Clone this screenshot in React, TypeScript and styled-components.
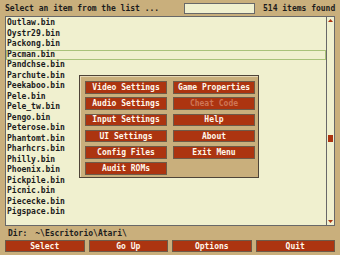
import React, { FC } from "react";
import styled, { createGlobalStyle } from "styled-components";

const GlobalStyle = createGlobalStyle`
  html, body {
    margin: 0;
    padding: 0;
    background: #c9af7c;
  }
  body {
    font-family: "DejaVu Sans Mono", "Liberation Mono", monospace;
  }
`;

const romList = [
  "Outlaw.bin",
  "Oystr29.bin",
  "Packong.bin",
  "Pacman.bin",
  "Pandchse.bin",
  "Parchute.bin",
  "Peekaboo.bin",
  "Pele.bin",
  "Pele_tw.bin",
  "Pengo.bin",
  "Peterose.bin",
  "Phantomt.bin",
  "Pharhcrs.bin",
  "Philly.bin",
  "Phoenix.bin",
  "Pickpile.bin",
  "Picnic.bin",
  "Piececke.bin",
  "Pigspace.bin",
];

const menuItems = [
  { label: "Video Settings" },
  { label: "Audio Settings" },
  { label: "Input Settings" },
  { label: "UI Settings" },
  { label: "Config Files" },
  { label: "Audit ROMs" },
  { label: "Game Properties" },
  { label: "Cheat Code", disabled: true },
  { label: "Help" },
  { label: "About" },
  { label: "Exit Menu" },
];

const Screen = styled.div`
  position: relative;
  width: 340px;
  height: 255px;
  box-sizing: border-box;
  padding: 0 5px;
  display: flex;
  flex-direction: column;
  background: #c9af7c;
  color: #1c1c1c;
  font-size: 8px;
  font-weight: bold;
  overflow: hidden;
`;

const Header = styled.div`
  height: 16px;
  display: flex;
  align-items: center;
`;

const Title = styled.div`
  flex: 1;
  white-space: pre;
`;

const SearchBox = styled.div`
  width: 71px;
  height: 11px;
  box-sizing: border-box;
  margin-right: 8px;
  background: #f0f0cf;
  border: 1px solid #686868;
`;

const Count = styled.div`
  width: 72px;
  white-space: pre;
`;

const ListBox = styled.div`
  height: 210px;
  box-sizing: border-box;
  display: flex;
  background: #f0f0cf;
  border: 1px solid #686868;
`;

const Rows = styled.div`
  flex: 1;
  padding-top: 1px;
  overflow: hidden;
`;

const Row = styled.div<{ $selected?: boolean }>`
  height: 10.5px;
  line-height: 10.5px;
  padding-left: 1px;
  white-space: pre;
  box-shadow: ${(p) => (p.$selected ? "inset 0 0 0 1px #a9c27a" : "none")};
`;

const ScrollBar = styled.div`
  position: relative;
  width: 7px;
  border-left: 1px solid #686868;
  display: flex;
  flex-direction: column;
  justify-content: space-between;
`;

const Arrow = styled.div`
  height: 7px;
  display: flex;
  align-items: center;
  justify-content: center;
`;

const Thumb = styled.div`
  position: absolute;
  left: 1px;
  right: 1px;
  height: 7px;
  background: #ac3410;
`;

const DirLine = styled.div`
  height: 14px;
  display: flex;
  align-items: center;
  padding-left: 3px;
  white-space: pre;
`;

const DirPath = styled.span`
  margin-left: 8px;
`;

const ButtonBar = styled.div`
  display: grid;
  grid-template-columns: repeat(4, 1fr);
  gap: 4px;
  height: 12px;
`;

const Button = styled.div<{ $disabled?: boolean }>`
  box-sizing: border-box;
  display: flex;
  align-items: center;
  justify-content: center;
  background: #ac3410;
  border: 1px solid #6e5a48;
  color: ${(p) => (p.$disabled ? "#cf7656" : "#fff8ec")};
  white-space: pre;
`;

const OptionsDialog = styled.div`
  position: absolute;
  left: 79px;
  top: 75px;
  width: 180px;
  height: 103px;
  box-sizing: border-box;
  padding: 5px 3px 2px 5px;
  background: #c9af7c;
  border: 1px solid #4e4438;
  box-shadow: inset 1px 1px 0 #e6d8b6;
  display: grid;
  grid-auto-flow: column;
  grid-template-columns: 82px 82px;
  grid-template-rows: repeat(6, 12.5px);
  gap: 3.8px 6px;
`;

const UpArrow: FC = () => (
  <svg width="5" height="3" viewBox="0 0 5 3">
    <polygon points="2.5,0 5,3 0,3" fill="#ac3410" />
  </svg>
);

const DownArrow: FC = () => (
  <svg width="5" height="3" viewBox="0 0 5 3">
    <polygon points="0,0 5,0 2.5,3" fill="#ac3410" />
  </svg>
);

const App: FC = () => {
  const selected = 3;
  const thumbTop = 118;
  return (
    <Screen>
      <GlobalStyle />
      <Header>
        <Title>Select an item from the list ...</Title>
        <SearchBox />
        <Count>514 items found</Count>
      </Header>
      <ListBox>
        <Rows>
          {romList.map((name, idx) => (
            <Row key={idx} $selected={idx === selected}>
              {name}
            </Row>
          ))}
        </Rows>
        <ScrollBar>
          <Arrow>
            <UpArrow />
          </Arrow>
          <Thumb style={{ top: thumbTop }} />
          <Arrow>
            <DownArrow />
          </Arrow>
        </ScrollBar>
      </ListBox>
      <DirLine>
        Dir:<DirPath>~\Escritorio\Atari\</DirPath>
      </DirLine>
      <ButtonBar>
        <Button>Select</Button>
        <Button>Go Up</Button>
        <Button>Options</Button>
        <Button>Quit</Button>
      </ButtonBar>
      <OptionsDialog>
        {menuItems.map((item) => (
          <Button key={item.label} $disabled={item.disabled}>
            {item.label}
          </Button>
        ))}
      </OptionsDialog>
    </Screen>
  );
};

export default App;
